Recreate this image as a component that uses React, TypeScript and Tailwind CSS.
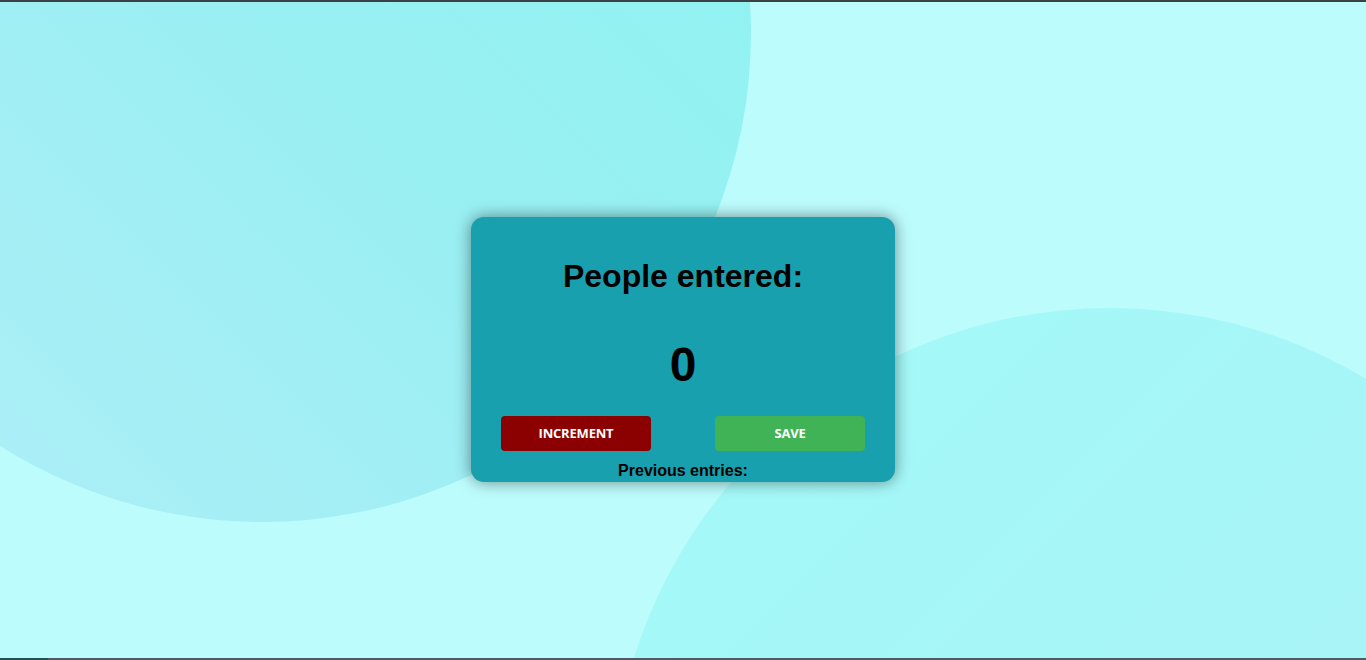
import React from "react";

export default function App() {
  return (
    <div className="relative w-full h-[660px] overflow-hidden bg-[#bdfcfd] border-t-2 border-[#3c4146] font-['Liberation_Sans',Arial,sans-serif]">
      <div className="absolute left-[-227px] top-[-458px] w-[978px] h-[978px] rounded-full bg-[linear-gradient(225deg,#8cf5f2_0%,#99eff2_50%,#b2eef8_100%)]" />
      <div className="absolute left-[611px] top-[306px] w-[998px] h-[1020px] rounded-full bg-[linear-gradient(135deg,#a2faf8_0%,#a8f5f7_50%,#b0eef5_100%)]" />
      <div className="absolute left-0 right-0 bottom-0 h-[2px] bg-[#505a60] flex">
        <div className="w-[48px] h-full bg-[#1f5052]" />
      </div>
      <div className="relative flex justify-center pt-[215px]">
        <div className="w-[424px] rounded-[13px] bg-[#19a0ae] shadow-[0_0_16px_rgba(0,0,0,0.45)] pt-[39px] pb-[1px] flex flex-col items-center text-black">
          <h1 className="text-[32px] leading-[40px] font-bold">People entered:</h1>
          <div className="mt-[41px] text-[48px] leading-[56px] font-bold">0</div>
          <div className="mt-[23px] w-full px-[30px] flex justify-between">
            <button className="w-[150px] h-[35px] pt-[1px] rounded-[4px] bg-[#8b0000] text-white text-[13px] font-bold tracking-[-0.2px] font-['Open_Sans',sans-serif]">INCREMENT</button>
            <button className="w-[150px] h-[35px] pt-[1px] rounded-[4px] bg-[#3fb356] text-white text-[13px] font-bold tracking-[-0.2px] font-['Open_Sans',sans-serif]">SAVE</button>
          </div>
          <p className="mt-[10px] text-[16px] leading-[20px] font-bold">Previous entries:</p>
        </div>
      </div>
    </div>
  );
}
